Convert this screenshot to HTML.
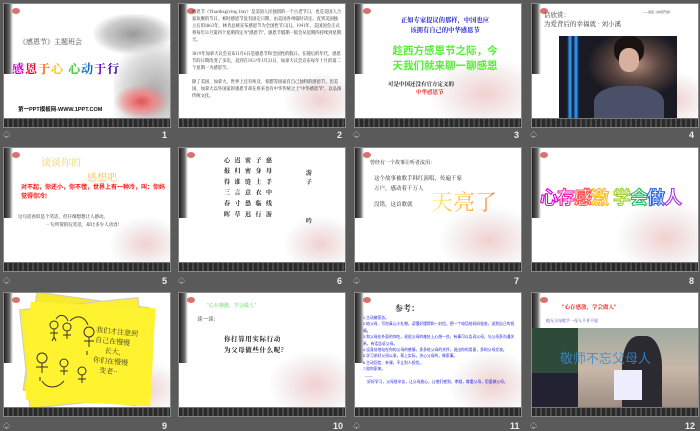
<!DOCTYPE html>
<html><head><meta charset="utf-8">
<style>
*{margin:0;padding:0;box-sizing:border-box}
body{width:700px;height:430px;background:#5a5a5a;position:relative;overflow:hidden;font-family:"Liberation Sans","Noto Sans CJK SC",sans-serif}
.s{position:absolute;width:168px;height:125px;background:#fff;border:1px solid #8a8a8a;overflow:hidden}
.s .ink{position:absolute;left:0;top:0;width:9px;height:70px;background:linear-gradient(90deg,#222,#666 60%,rgba(255,255,255,0));}
.s .ink:after{content:"";position:absolute;left:8px;top:4px;width:8px;height:6px;border-radius:50%;background:#c33;opacity:.7}
.s .bar{position:absolute;left:0;right:0;bottom:0;height:9px;background:repeating-linear-gradient(90deg,#2a2a2a 0 3px,#4a4a4a 3px 5px);border-top:1px solid #777}
.s .plum{position:absolute;right:0;bottom:9px;width:60px;height:45px;background:radial-gradient(ellipse at 60% 60%,rgba(230,170,170,.55),rgba(220,200,200,.25) 50%,rgba(255,255,255,0) 75%)}
.n{position:absolute;color:#eee;font-size:9px;font-weight:bold}
.ic{position:absolute;color:#ccc;font-size:7px}
.t{position:absolute;font-family:"Noto Serif CJK SC","Noto Sans CJK SC",serif;color:#222}
</style></head><body>

<!-- slide 1 -->
<div class="s" style="left:3px;top:3px">
 <div style="position:absolute;left:90px;top:10px;width:78px;height:40px;background:radial-gradient(ellipse at 50% 50%,#9a9a9a,#ccc 50%,rgba(255,255,255,0) 75%)"></div>
 <div style="position:absolute;left:110px;top:40px;width:58px;height:80px;background:radial-gradient(ellipse at 70% 60%,#aaa,#ddd 55%,rgba(255,255,255,0) 80%)"></div>
 <div class="ink"></div>
 <div class="t" style="left:15px;top:33px;font-size:7px;color:#444">《感恩节》主题班会</div>
 <div class="t" style="left:8px;top:56px;font-size:12px;font-weight:bold;letter-spacing:1px"><span style="color:#c0c">感</span><span style="color:#e03">恩</span><span style="color:#f60">于</span><span style="color:#fc0">心</span> <span style="color:#3c3">心</span><span style="color:#06c">动</span><span style="color:#60c">于</span><span style="color:#309">行</span></div>
 <div style="position:absolute;left:14px;top:101px;font-size:5.5px;font-weight:bold;color:#111">第一PPT模板网-WWW.1PPT.COM</div>
 <div style="position:absolute;left:110px;top:80px;width:55px;height:35px;background:radial-gradient(ellipse,#d55 0,#e88 30%,rgba(255,255,255,0) 70%)"></div>
 <div class="bar"></div>
</div>
<div class="ic" style="left:3px;top:130px">♤</div><div class="n" style="left:162px;top:130px">1</div>

<!-- slide 2 -->
<div class="s" style="left:178px;top:3px">
 <div class="ink"></div><div class="plum"></div>
 <div class="t" style="left:13px;top:5px;width:150px;font-size:4.3px;line-height:7px">感恩节（Thanksgiving Day）是美国人民独创的一个古老节日，也是美国人合家欢聚的节日。初时感恩节没有固定日期，由美国各州临时决定。直到美国独立后的1863年，林肯总统宣布感恩节为全国性节日[1]。1941年，美国国会正式将每年11月第四个星期四定为"感恩节"。感恩节假期一般会从星期四持续到星期天。<br><br>1879年加拿大议会宣布11月6日是感恩节和全国性的假日。在随后的年代，感恩节的日期改变了多次，直到在1957年1月31日，加拿大议会宣布每年十月的第二个星期一为感恩节。<br><br>除了美国、加拿大，世界上还有埃及、希腊等国家有自己独特的感恩节。但美国、加拿大以外国家的感恩节却在将来也有中华传统之上"中华感恩节"，以弘扬传统文化。</div>
 <div class="bar"></div>
</div>
<div class="n" style="left:337px;top:130px">2</div>

<!-- slide 3 -->
<div class="s" style="left:354px;top:3px">
 <div class="ink"></div><div class="plum" style="width:90px;height:60px"></div>
 <div class="t" style="left:30px;top:11px;width:120px;text-align:center;font-size:6.3px;font-weight:bold;color:#22c;line-height:10px">正如专家提议的那样，中国也应<br>该拥有自己的中华感恩节</div>
 <div style="position:absolute;left:25px;top:40px;width:130px;text-align:center;font-size:10.5px;font-weight:bold;color:#5e3;line-height:15px">趁西方感恩节之际，今<br>天我们就来聊一聊感恩</div>
 <div class="t" style="left:33px;top:76px;font-size:5.5px;font-weight:bold">可是中国还没有官方定义的</div>
 <div class="t" style="left:61px;top:84px;font-size:5.5px;font-weight:bold;color:#e22">中华感恩节</div>
 <div class="bar"></div>
</div>
<div class="ic" style="left:353px;top:130px">♤</div><div class="n" style="left:514px;top:130px">3</div>

<!-- slide 4 -->
<div class="s" style="left:531px;top:3px">
 <div class="ink"></div><div class="plum"></div>
 <div class="t" style="left:12px;top:6px;font-size:6.5px;line-height:9px;color:#333">话欣赏：<br>为爱背后的幸福就 · 刘小溪</div>
 <div style="position:absolute;left:110px;top:6px;font-size:3px;color:#555">——选自《央视开讲》</div>
 <div style="position:absolute;left:27px;top:32px;width:118px;height:82px;background:radial-gradient(ellipse at 65% 35%,#b08a7a 0,#5a4540 22%,#1a1a22 45%),#111;overflow:hidden">
  <div style="position:absolute;left:8px;top:0;width:12px;height:82px;background:linear-gradient(90deg,#113,#3af,#113,#3af,#113)"></div>
  <div style="position:absolute;left:55px;top:0;width:30px;height:28px;border-radius:45%;background:#1a1210"></div>
  <div style="position:absolute;left:60px;top:12px;width:20px;height:24px;border-radius:45%;background:#d8b0a0"></div>
  <div style="position:absolute;left:35px;top:50px;width:70px;height:40px;border-radius:40% 40% 0 0;background:#4a5068"></div>
 </div>
 <div class="bar"></div>
</div>
<div class="ic" style="left:530px;top:130px">♤</div><div class="n" style="left:689px;top:130px">4</div>

<!-- slide 5 -->
<div class="s" style="left:3px;top:147px">
 <div class="ink"></div><div class="plum"></div>
 <div class="t" style="left:37px;top:6px;font-size:10px;color:#f3d25a">谈谈你的</div>
 <div class="t" style="left:83px;top:21px;font-size:10px;color:#f3c55a">感想吧</div>
 <div style="position:absolute;left:17px;top:36px;width:148px;font-size:6px;font-weight:bold;color:#f11;line-height:9px">对不起，你还小，你不懂，世界上有一种冷，叫：你妈觉得你冷!</div>
 <div class="t" style="left:14px;top:65px;font-size:4.5px;line-height:8px">这句话看似是个笑话，但仔细想想让人感动。<br>&nbsp;&nbsp;&nbsp;&nbsp;&nbsp;&nbsp;&nbsp;&nbsp;&nbsp;&nbsp;&nbsp;&nbsp;&nbsp;&nbsp;&nbsp;&nbsp;&nbsp;&nbsp;&nbsp;&nbsp;&nbsp;&nbsp;&nbsp;&nbsp;一句所谓的玩笑话，却让多少人动容!</div>
 <div class="bar"></div>
</div>
<div class="ic" style="left:3px;top:276px">♤</div><div class="n" style="left:162px;top:276px">5</div>

<!-- slide 6 -->
<div class="s" style="left:178px;top:147px">
 <div class="ink"></div><div class="plum"></div>
 <div class="t" style="left:42px;top:9px;font-size:6px;font-weight:bold;line-height:10.5px;writing-mode:vertical-rl;letter-spacing:4.8px;height:70px">慈母手中线游子身上衣临行密密缝意恐迟迟归谁言寸草心报得三春晖</div>
 <div class="t" style="left:127px;top:20px;font-size:6px;font-weight:bold;line-height:9px">游<br>子</div>
 <div class="t" style="left:127px;top:68px;font-size:6px;font-weight:bold">吟</div>
 <div class="bar"></div>
</div>
<div class="ic" style="left:178px;top:276px">♤</div><div class="n" style="left:337px;top:276px">6</div>

<!-- slide 7 -->
<div class="s" style="left:354px;top:147px">
 <div class="ink"></div><div class="plum" style="width:80px;height:55px"></div>
 <div class="t" style="left:15px;top:11px;font-size:5px">曾经有一个故事让听者流泪：</div>
 <div class="t" style="left:19px;top:25px;font-size:5.5px;line-height:10px">这个故事被歌手韩红演唱，传遍千家<br>万户，感动着千万人</div>
 <div class="t" style="left:19px;top:52px;font-size:5.5px">没错，这首歌就</div>
 <div class="t" style="left:76px;top:38px;font-size:22px;background:linear-gradient(90deg,#fe5,#fb4,#f84);-webkit-background-clip:text;color:transparent">天亮了</div>
 <div class="bar"></div>
</div>
<div class="ic" style="left:353px;top:276px">♤</div><div class="n" style="left:514px;top:276px">7</div>

<!-- slide 8 -->
<div class="s" style="left:531px;top:147px">
 <div class="ink"></div><div class="plum" style="width:80px;height:60px"></div>
 <svg style="position:absolute;left:8px;top:34px" width="160" height="30" viewBox="0 0 160 30">
  <g font-family="Noto Sans CJK SC, sans-serif" font-weight="bold" font-size="18" fill="#fff" stroke-width="1.1">
   <text x="0" y="22" stroke="#d0d">心</text>
   <text x="17" y="22" stroke="#e2a">存</text>
   <text x="34" y="22" stroke="#f55">感</text>
   <text x="51" y="22" stroke="#fb2">激</text>
   <text x="73" y="22" stroke="#9c2">学</text>
   <text x="90" y="22" stroke="#2b6">会</text>
   <text x="107" y="22" stroke="#36d">做</text>
   <text x="124" y="22" stroke="#a3d">人</text>
  </g>
 </svg>
 <div class="bar"></div>
</div>
<div class="n" style="left:689px;top:276px">8</div>

<!-- slide 9 -->
<div class="s" style="left:3px;top:292px">
 <div class="ink"></div><div class="plum"></div>
 <div style="position:absolute;left:25px;top:6px;width:115px;height:100px;background:#f6ea2a;transform:rotate(8deg);border:1px solid #ccc"></div>
 <div style="position:absolute;left:20px;top:10px;width:120px;height:100px;background:#fbf032;transform:rotate(-6deg);border:1px solid #ccc"></div>
 <div style="position:absolute;left:24px;top:12px;width:125px;height:98px;background:#fff22e;transform:rotate(3deg)"></div>
 <svg style="position:absolute;left:28px;top:20px" width="70" height="80" viewBox="0 0 70 80" fill="none" stroke="#333" stroke-width="1">
  <circle cx="22" cy="12" r="4"/><path d="M22 16v8M18 20h8M20 28l2-4 2 4"/>
  <circle cx="35" cy="14" r="4"/><path d="M35 18v8M31 22h8"/>
  <circle cx="57" cy="19" r="5"/><path d="M57 24v10M52 28h10M55 38v4"/>
  <circle cx="10" cy="45" r="5"/><path d="M10 50v10M4 54h12M8 64v4"/>
  <circle cx="32" cy="50" r="4"/><path d="M32 54v8M28 58h8"/>
  <circle cx="50" cy="58" r="4"/><path d="M50 62v8M46 66h8"/>
  <path d="M24 6c4-6 10-4 12 2M38 8c6-6 14-6 18 4M10 68c5 8 15 8 22 0"/>
 </svg>
 <div class="t" style="left:90px;top:34px;font-size:7px;line-height:10px;color:#333;transform:rotate(6deg)">我们才注意到<br>自己在慢慢<br>&nbsp;&nbsp;&nbsp;&nbsp;&nbsp;&nbsp;长大,<br>你们在慢慢<br>&nbsp;&nbsp;&nbsp;&nbsp;变老··</div>
 <div class="bar"></div>
</div>
<div class="ic" style="left:3px;top:421px">♤</div><div class="n" style="left:162px;top:421px">9</div>

<!-- slide 10 -->
<div class="s" style="left:178px;top:292px">
 <div class="ink"></div><div class="plum" style="width:75px;height:55px"></div>
 <div class="t" style="left:28px;top:9px;font-size:5px;color:#5c5">"心存感激，学会做人"</div>
 <div class="t" style="left:18px;top:22px;font-size:5.5px">谈一谈:</div>
 <div class="t" style="left:45px;top:40px;font-size:6.5px;font-weight:bold;line-height:11px;letter-spacing:.6px">你打算用实际行动<br>为父母做些什么呢?</div>
 <div class="bar"></div>
</div>
<div class="n" style="left:333px;top:421px">10</div>

<!-- slide 11 -->
<div class="s" style="left:354px;top:292px">
 <div class="ink"></div><div class="plum" style="width:70px;height:55px"></div>
 <div class="t" style="left:40px;top:10px;font-size:8px;font-weight:bold;color:#333">参考：</div>
 <div style="position:absolute;left:8px;top:22px;width:155px;font-size:3.8px;line-height:6.4px;color:#22d">
 1.主动做家务。<br>2.給父母、写你真心小礼物，读懂好懂得和一封信，把一个电话给妈妈爸爸，送到自己的祝福。<br>3.和父母在外面的你吃，说说父母的难处上心想一些，有事可以告诉父母，与父母多沟通关系，有话告诉父母。<br>4.设身处地站在你的父母的感情，多多给父母的关怀，说出你的用意，多和父母交流。<br>5.学习求好父母以承，帮上实际，关心父母的，做家事。<br>6.主动回信、补课，不让别人担忧。<br>7.陪你家来。<br>&nbsp;&nbsp;——<br>&nbsp;&nbsp;&nbsp;&nbsp;好好学习，父母很辛苦，让父母放心，让他们感到，孝顺，尊重父母，用爱做父母。</div>
 <div class="bar"></div>
</div>
<div class="ic" style="left:353px;top:421px">♤</div><div class="n" style="left:510px;top:421px">11</div>

<!-- slide 12 -->
<div class="s" style="left:531px;top:292px">
 <div class="ink"></div>
 <div class="t" style="left:30px;top:10px;font-size:5.5px;font-weight:bold;color:#e22">"心存感激，学会做人"</div>
 <div class="t" style="left:14px;top:25px;font-size:4px;color:#33a">他无父母般手一母人不肯不说</div>
 <div style="position:absolute;left:0;top:35px;width:168px;height:82px;background:#5a6a5a;overflow:hidden">
  <div style="position:absolute;left:0;top:0;width:46px;height:45px;background:#2e4a3a"></div>
  <div style="position:absolute;left:0;top:45px;width:46px;height:37px;background:#223"></div>
  <div style="position:absolute;left:46px;top:0;width:122px;height:82px;background:linear-gradient(180deg,#a0aaa0,#c8b8a8 50%,#9a8a80)"></div>
  <div style="position:absolute;left:90px;top:8px;width:40px;height:74px;background:#2a2a30;border-radius:40% 40% 0 0"></div>
  <div style="position:absolute;left:82px;top:42px;width:28px;height:30px;background:#eef"></div>
  <div style="position:absolute;left:28px;top:20px;font-size:13px;color:#3a8ad0;opacity:.85;white-space:nowrap">敬师不忘父母人</div>
 </div>
 <div class="bar"></div>
</div>
<div class="ic" style="left:530px;top:421px">♤</div><div class="n" style="left:685px;top:421px">12</div>

</body></html>
